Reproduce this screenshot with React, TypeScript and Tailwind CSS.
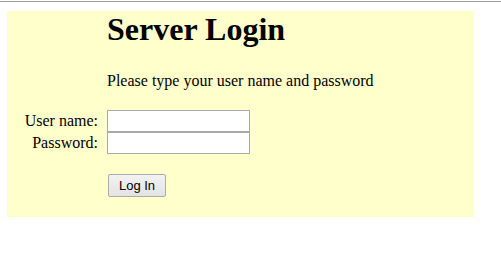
export default function App() {
  return (
    <div className="w-[501px] h-[255px] bg-white overflow-hidden text-black" style={{ fontFamily: '"Liberation Serif", "Times New Roman", serif' }}>
      <div className="h-px mt-px bg-[#a0a0a0]" />
      <div className="ml-[7px] mt-[9px] w-[467px] h-[206px] bg-[#ffffcc] flex flex-col">
        <h1 className="pl-[100px] text-[32px] leading-[36px] font-bold m-0">Server Login</h1>
        <p className="pl-[100px] mt-[25px] text-[16px] leading-[18px]">Please type your user name and password</p>
        <div className="mt-[20px] flex flex-col">
          <div className="flex items-center h-[22px]">
            <label className="w-[91px] text-right text-[16px] leading-[18px]">User name:</label>
            <input type="text" className="ml-[9px] w-[143px] h-[22px] border border-[#a9a9a9] bg-white outline-none" />
          </div>
          <div className="flex items-center h-[22px]">
            <label className="w-[91px] text-right text-[16px] leading-[18px]">Password:</label>
            <input type="password" className="ml-[9px] w-[143px] h-[22px] border border-[#a9a9a9] bg-white outline-none" />
          </div>
        </div>
        <div className="mt-[20px] pl-[101px] flex">
          <button
            className="w-[58px] h-[23px] border border-[#acacac] rounded-[2px] bg-gradient-to-b from-[#f2f2f2] to-[#e3e3e3] text-[13px] leading-[15px] text-black flex items-center justify-center"
            style={{ fontFamily: '"Liberation Sans", Arial, sans-serif' }}
          >
            Log In
          </button>
        </div>
      </div>
    </div>
  );
}
